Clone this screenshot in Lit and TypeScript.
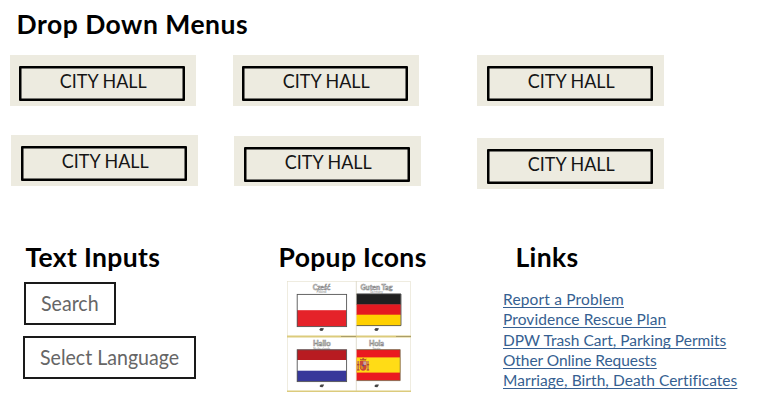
import { LitElement, html, css, svg } from "lit";
import { customElement, property } from "lit/decorators.js";
import { styleMap } from "lit/directives/style-map.js";

@customElement("menu-button")
class MenuButton extends LitElement {
  @property() label = "";
  static styles = css`
    :host { display: block; box-sizing: border-box; width: 186px; height: 51px; background: #edebe0; padding: 11px 11px 5px 9px; }
    .box { box-sizing: border-box; height: 35px; border: 2px solid #000; border-radius: 1px; box-shadow: inset 0 0 0 0.5px #000; text-align: center; font-size: 19.5px; line-height: 25px; color: #151515; white-space: nowrap; }
    .text { display: inline-block; transform: scaleX(0.92); margin-left: 2px; }
  `;
  render() { return html`<div class="box"><span class="text">${this.label}</span></div>`; }
}

@customElement("flag-cards")
class FlagCards extends LitElement {
  static styles = css`
    :host { display: block; width: 124px; height: 112px; }
    svg { display: block; }
    .hi { font: bold 7.2px Lato, sans-serif; fill: #fff; stroke: #8c8c8c; stroke-width: 0.6px; }
    .sub { font: 2.8px Lato, sans-serif; fill: #888; }
  `;
  card(hi: string, w: number, sub: string, sw: number, cx: number, top: number) {
    return svg`
      <text class="hi" x=${cx - w / 2} y=${top + 8.6} textLength=${w} lengthAdjust="spacingAndGlyphs">${hi}</text>
      <text class="sub" x=${cx - sw / 2} y=${top + 12.2} textLength=${sw} lengthAdjust="spacingAndGlyphs">${sub}</text>
      <path d="M${cx - 2.2} ${top + 48.6}l1.4-1.5 3.2.1-.6 1.5-1 1.2-2.2-.1z" fill="#444"/>`;
  }
  render() {
    return html`<svg width="124" height="112" viewBox="287 281 124 112">
      <rect x="287.4" y="281.5" width="123.2" height="110" fill="#fff" stroke="#e4dfcc" stroke-width=".6"/>
      <path d="M356.3 281V392" stroke="#dcd8c8" stroke-width=".9"/>
      <path d="M287 336.5H411" stroke="#dccb7c" stroke-width="2"/>
      <path d="M287 391.2H411" stroke="#dccb7c" stroke-width="1.6"/>
      <path d="M341 336.5H356M396 336.5H411" stroke="#aa9d68" stroke-width="1.2"/>
      ${this.card("Cześć", 17.5, "Poland", 10, 321.5, 281)}
      ${this.card("Guten Tag", 32, "Germany", 13, 376.5, 281)}
      ${this.card("Hallo", 17.5, "Netherlands", 17, 321.7, 337.3)}
      ${this.card("Hola", 15, "Spain", 8, 376.5, 337.3)}
      <rect x="297" y="294" width="49.6" height="16.5" fill="#fff"/>
      <rect x="297" y="310.2" width="49.6" height="16.4" fill="#e52229"/>
      <rect x="297.2" y="294.4" width="49.4" height="32.2" fill="none" stroke="#555" stroke-width=".9"/>
      <rect x="356.6" y="293.8" width="44.2" height="11" fill="#202020"/>
      <rect x="356.6" y="304.4" width="44.2" height="10.6" fill="#e41920"/>
      <rect x="356.6" y="314.7" width="44.2" height="11" fill="#ffd000"/>
      <path d="M356.6 294H401V325.6H356.6" fill="none" stroke="#444" stroke-width=".8"/>
      <rect x="297" y="349.6" width="49.6" height="10.6" fill="#b81b21"/>
      <rect x="297" y="360" width="49.6" height="11" fill="#fff"/>
      <rect x="297" y="370.7" width="49.6" height="10.8" fill="#37389a"/>
      <rect x="297.2" y="349.8" width="49.4" height="31.8" fill="none" stroke="#555" stroke-width=".9"/>
      <rect x="356.6" y="349.6" width="43.6" height="31" fill="#ea1a20"/>
      <rect x="356.6" y="357.4" width="43.6" height="15.2" fill="#ffdc16"/>
      <path d="M356.6 349.6H400.2V380.6H356.6" fill="none" stroke="#664" stroke-width=".7"/>
      <path d="M358.2 361v9M368 361v9" stroke="#bc755c" stroke-width="1.5"/>
      <path d="M357 364.8h2.4M366.8 364.8h2.4M357 370h2.6M366.6 370h2.6" stroke="#a33" stroke-width="1.1"/>
      <path d="M359.8 361h6.8v6.5q-.3 2.9-3.4 3.2-3.1-.3-3.4-3.2z" fill="#c9473c"/>
      <path d="M363.3 361.4h2.9v3.6h-2.9z" fill="#c9a4a0"/>
      <path d="M360.2 365.5h3v3.5h-2z" fill="#d98a20"/>
      <circle cx="363.2" cy="365.5" r="1" fill="#5b4a8a"/>
      <path d="M360.4 360.6l-.6-2 1.8.6 1.6-1.4 1.6 1.4 1.8-.6-.6 2z" fill="#b4542c"/>
    </svg>`;
  }
}

// Link label and its tracking in pixels
const LINKS: [string, number][] = [
  ["Report a Problem", 0.17],
  ["Providence Rescue Plan", 0.09],
  ["DPW Trash Cart, Parking Permits", 0],
  ["Other Online Requests", -0.06],
  ["Marriage, Birth, Death Certificates", 0.05],
];

@customElement("app-root")
class AppRoot extends LitElement {
  static styles = css`
    :host { display: block; box-sizing: border-box; width: 763px; height: 409px; background: #fff; overflow: hidden; font-family: Lato, "Liberation Sans", sans-serif; color: #000; }
    h1, h2 { margin: 0; font-size: 26.5px; line-height: 30px; font-weight: bold; white-space: nowrap; letter-spacing: 0.35px; }
    h1 { padding: 9px 0 0 16.5px; height: 46px; letter-spacing: 0.5px; }
    .menus { display: grid; grid-template-columns: 223px 244px 187px; grid-template-rows: 80px 107px; padding-left: 10px; }
    .r2 { margin-left: 1px; }
    .r2.first { width: 187px; padding-left: 10px; }
    .mid2 { margin-top: 1px; width: 187px; height: 50px; padding-left: 10px; }
    .last { width: 187px; padding-left: 10px; }
    .last2 { margin-top: 3px; }
    .lower { display: grid; grid-template-columns: 264px 216px 1fr; padding-left: 23px; }
    .one h2 { padding-left: 2.5px; }
    .two h2 { margin-left: -8.5px; }
    .three h2 { padding-left: 12.5px; }
    .field { box-sizing: border-box; border: 2px solid #1a1a1a; color: #666; font-size: 20.5px; white-space: nowrap; line-height: 38px; height: 43px; padding-left: 14.5px; }
    .field span { display: inline-block; transform: scaleX(0.955); transform-origin: 0 50%; }
    .search { width: 92px; margin: 10px 0 0 1px; }
    .lang { width: 173px; margin-top: 11px; }
    flag-cards { margin-top: 9px; }
    .links { display: flex; flex-direction: column; align-items: flex-start; margin-top: 17px; }
    a { color: #365f91; font-size: 15.5px; line-height: 20.35px; text-decoration: underline; text-decoration-skip-ink: none; text-decoration-thickness: 1px; text-underline-offset: 2px; white-space: nowrap; }
  `;
  render() {
    return html`
      <h1>Drop Down Menus</h1>
      <div class="menus">
        <menu-button label="CITY HALL"></menu-button>
        <menu-button label="CITY HALL"></menu-button>
        <menu-button class="last" label="CITY HALL"></menu-button>
        <menu-button class="r2 first" label="CITY HALL"></menu-button>
        <menu-button class="r2 mid2" label="CITY HALL"></menu-button>
        <menu-button class="last last2" label="CITY HALL"></menu-button>
      </div>
      <div class="lower">
        <section class="one"><h2>Text Inputs</h2>
          <div class="field search"><span>Search</span></div>
          <div class="field lang"><span>Select Language</span></div></section>
        <section class="two"><h2>Popup Icons</h2><flag-cards></flag-cards></section>
        <section class="three"><h2>Links</h2>
          <nav class="links">
            ${LINKS.map(([t, s]) => html`<a style=${styleMap({ letterSpacing: `${s}px` })}>${t}</a>`)}
          </nav></section>
      </div>`;
  }
}
